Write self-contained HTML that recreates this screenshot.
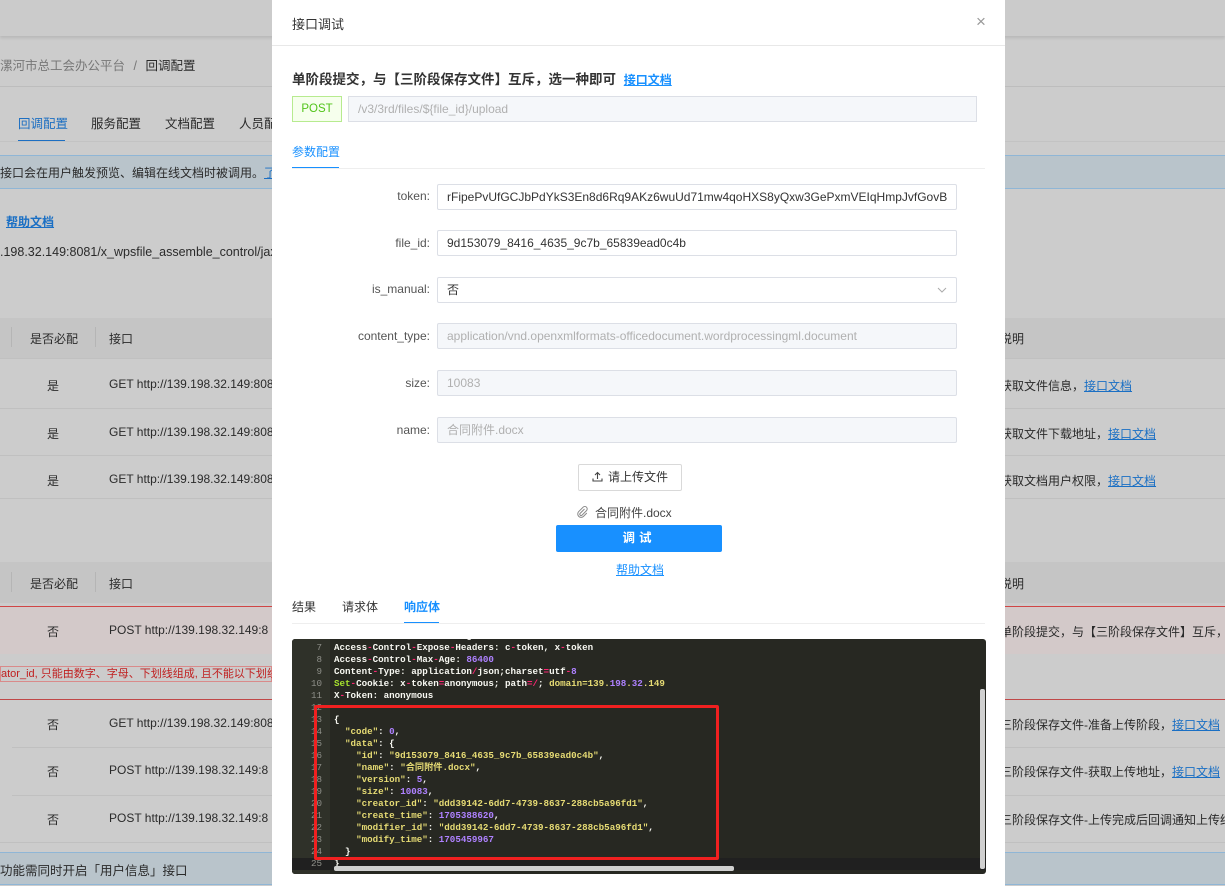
<!DOCTYPE html>
<html><head><meta charset="utf-8"><style>
*{box-sizing:border-box;margin:0;padding:0}
body{width:1225px;height:886px;overflow:hidden;position:relative;background:#cccccc;font-family:"Liberation Sans","Noto Sans CJK SC",sans-serif;font-size:12px;color:#333}
.a{position:absolute;white-space:nowrap}
.bg{color:#2a2a2a}
.lnk{color:#1a6fc4;text-decoration:underline}
.hl{position:absolute;left:0;right:0;height:1px;background:#bdbdbd}
.modal{position:absolute;left:272px;top:0;width:733px;height:886px;background:#fff}
.lbl{position:absolute;right:575px;font-size:12px;color:#555}
.inp{position:absolute;left:165px;width:520px;height:26px;border:1px solid #dcdfe6;border-radius:2px;padding:0 9px;line-height:24px;font-size:12px;color:#333}
.dis{background:#f5f7fa;color:#b0b0b0}
.code{position:absolute;left:20px;top:639px;width:694px;height:235px;background:#272822;border-radius:3px;overflow:hidden;font-family:"Liberation Mono","Noto Sans CJK SC",monospace;font-size:9.2px;color:#f8f8f2;font-weight:bold}
.gut{position:absolute;left:0;top:0;width:38px;height:100%;background:#2f3129}
.ln{position:absolute;height:12px;line-height:12px}
.n{position:absolute;left:0;width:30px;text-align:right;color:#8f908a;font-weight:normal}
.t{position:absolute;left:42px}
.s{color:#e6db74}.p{color:#ae81ff}.r{color:#f92672}.g{color:#a6e22e}
</style></head><body>
<div class="a" style="left:0;top:0;width:1225px;height:36px;background:#cbcbcb;box-shadow:0 2px 3px rgba(0,0,0,.1)"></div>
<div class="a" style="left:0;top:55px;font-size:12.5px;color:#777">漯河市总工会办公平台 <span style="margin:0 5px">/</span> <span class="bg">回调配置</span></div>
<div class="hl" style="top:86px"></div>
<div class="a" style="left:18px;top:113px;font-size:12.5px;color:#1d6fc2">回调配置</div>
<div class="a" style="left:18px;top:140px;width:47px;height:2px;background:#1d6fc2"></div>
<div class="a bg" style="left:91px;top:113px;font-size:12.5px">服务配置</div>
<div class="a bg" style="left:165px;top:113px;font-size:12.5px">文档配置</div>
<div class="a bg" style="left:239px;top:113px;font-size:12.5px">人员配</div>
<div class="hl" style="top:141px;background:#c3c3c3"></div>
<div class="a" style="left:0;top:155px;width:1225px;height:34px;background:#b9c4cb;border-top:1px solid #8fb6d6;border-bottom:1px solid #8fb6d6"></div>
<div class="a bg" style="left:0;top:164px;font-size:12px">接口会在用户触发预览、编辑在线文档时被调用。<span class="lnk">了解</span></div>
<div class="a lnk" style="left:6px;top:213px;font-weight:bold">帮助文档</div>
<div class="a bg" style="left:0;top:245px;font-size:12.5px">.198.32.149:8081/x_wpsfile_assemble_control/jax</div>
<div class="a" style="left:0;top:318px;width:1225px;height:40px;background:#c5c5c5"></div>
<div class="a bg" style="left:30px;top:330px">是否必配</div>
<div class="a" style="left:11px;top:327px;width:1px;height:20px;background:#b5b5b5"></div>
<div class="a" style="left:95px;top:327px;width:1px;height:20px;background:#b5b5b5"></div>
<div class="a bg" style="left:109px;top:330px">接口</div>
<div class="a bg" style="left:1000px;top:330px">说明</div>
<div class="hl" style="top:358px;background:#c0c0c0"></div>
<div class="a bg" style="left:47px;top:377px">是</div><div class="a bg" style="left:109px;top:377px">GET http://139.198.32.149:808</div><div class="a bg" style="left:1000px;top:377px">获取文件信息，<span class="lnk">接口文档</span></div>
<div class="hl" style="top:408px;background:#c0c0c0"></div>
<div class="a bg" style="left:47px;top:425px">是</div><div class="a bg" style="left:109px;top:425px">GET http://139.198.32.149:808</div><div class="a bg" style="left:1000px;top:425px">获取文件下载地址，<span class="lnk">接口文档</span></div>
<div class="hl" style="top:455px;background:#c0c0c0"></div>
<div class="a bg" style="left:47px;top:472px">是</div><div class="a bg" style="left:109px;top:472px">GET http://139.198.32.149:808</div><div class="a bg" style="left:1000px;top:472px">获取文档用户权限，<span class="lnk">接口文档</span></div>
<div class="hl" style="top:498px;background:#c0c0c0"></div>
<div class="a" style="left:0;top:562px;width:1225px;height:41px;background:#c5c5c5"></div>
<div class="a bg" style="left:30px;top:575px">是否必配</div>
<div class="a" style="left:11px;top:572px;width:1px;height:20px;background:#b5b5b5"></div>
<div class="a" style="left:95px;top:572px;width:1px;height:20px;background:#b5b5b5"></div>
<div class="a bg" style="left:109px;top:575px">接口</div>
<div class="a bg" style="left:1000px;top:575px">说明</div>
<div class="a" style="left:0;top:606px;width:1225px;height:48px;background:#d3c9c9;border-top:1px solid #d04545"></div>
<div class="a bg" style="left:47px;top:623px">否</div><div class="a bg" style="left:109px;top:623px">POST http://139.198.32.149:8</div><div class="a bg" style="left:1000px;top:623px">单阶段提交，与【三阶段保存文件】互斥，选</div>
<div class="a" style="left:0;top:666px;width:272px;height:16px;border:1px solid #d98a8a;color:#c02020;font-size:11px;line-height:14px">ator_id, 只能由数字、字母、下划线组成, 且不能以下划线开头</div>
<div class="hl" style="top:699px;background:#c04848"></div>
<div class="a bg" style="left:47px;top:716px">否</div><div class="a bg" style="left:109px;top:716px">GET http://139.198.32.149:808</div><div class="a bg" style="left:1000px;top:716px">三阶段保存文件-准备上传阶段，<span class="lnk">接口文档</span></div>
<div class="hl" style="top:747px;left:12px;background:#c0c0c0"></div>
<div class="a bg" style="left:47px;top:763px">否</div><div class="a bg" style="left:109px;top:763px">POST http://139.198.32.149:8</div><div class="a bg" style="left:1000px;top:763px">三阶段保存文件-获取上传地址，<span class="lnk">接口文档</span></div>
<div class="hl" style="top:795px;left:12px;background:#c0c0c0"></div>
<div class="a bg" style="left:47px;top:811px">否</div><div class="a bg" style="left:109px;top:811px">POST http://139.198.32.149:8</div><div class="a bg" style="left:1000px;top:811px">三阶段保存文件-上传完成后回调通知上传结</div>
<div class="hl" style="top:842px;background:#c0c0c0"></div>
<div class="a" style="left:0;top:852px;width:1225px;height:33px;background:#b9c4cb;border-top:1px solid #8fb6d6;border-bottom:1px solid #8fb6d6"></div>
<div class="a bg" style="left:0;top:860px;font-size:12.5px">功能需同时开启「用户信息」接口</div>

<div class="modal">
<div class="a" style="left:20px;top:14px;font-size:13px;color:#333">接口调试</div>
<div class="a" style="left:704px;top:13px;font-size:17px;color:#999;line-height:17px">×</div>
<div class="a" style="left:0;top:45px;width:733px;height:1px;background:#e8e8e8"></div>
<div class="a" style="left:20px;top:68px;font-size:13.5px;font-weight:bold;color:#333">单阶段提交，与【三阶段保存文件】互斥，选一种即可 <span style="font-size:12px;color:#1890ff;text-decoration:underline;margin-left:4px">接口文档</span></div>
<div class="a" style="left:20px;top:96px;width:50px;height:26px;border:1px solid #b7eb8f;background:#f6ffed;color:#52c41a;font-size:11.5px;text-align:center;line-height:24px">POST</div>
<div class="a dis" style="left:76px;top:96px;width:629px;height:26px;border:1px solid #dcdfe6;padding-left:9px;line-height:24px;font-size:12px">/v3/3rd/files/${file_id}/upload</div>
<div class="a" style="left:20px;top:143px;font-size:12px;color:#1890ff">参数配置</div>
<div class="a" style="left:20px;top:167px;width:47px;height:2px;background:#1890ff"></div>
<div class="a" style="left:20px;top:168px;width:693px;height:1px;background:#eee"></div>

<div class="lbl" style="top:189px">token:</div><div class="inp" style="top:184px">rFipePvUfGCJbPdYkS3En8d6Rq9AKz6wuUd71mw4qoHXS8yQxw3GePxmVEIqHmpJvfGovB</div>
<div class="lbl" style="top:236px">file_id:</div><div class="inp" style="top:230px">9d153079_8416_4635_9c7b_65839ead0c4b</div>
<div class="lbl" style="top:282px">is_manual:</div><div class="inp" style="top:277px">否<svg style="position:absolute;right:9px;top:9px" width="10" height="6" viewBox="0 0 10 6"><path d="M1 1L5 5 9 1" fill="none" stroke="#aaa"/></svg></div>
<div class="lbl" style="top:329px">content_type:</div><div class="inp dis" style="top:323px">application/vnd.openxmlformats-officedocument.wordprocessingml.document</div>
<div class="lbl" style="top:376px">size:</div><div class="inp dis" style="top:370px">10083</div>
<div class="lbl" style="top:423px">name:</div><div class="inp dis" style="top:417px">合同附件.docx</div>

<div class="a" style="left:306px;top:464px;width:104px;height:27px;border:1px solid #d9d9d9;border-radius:2px;text-align:center;line-height:25px;font-size:12px;color:#333">
<svg width="11" height="11" viewBox="0 0 11 11" style="vertical-align:-1px;margin-right:5px"><path d="M5.5 8V1.5M3 4L5.5 1.5 8 4M1 7.5V10H10V7.5" fill="none" stroke="#444" stroke-width="1.1"/></svg>请上传文件</div>
<div class="a" style="left:305px;top:504px;font-size:12px;color:#444"><svg width="11" height="12" viewBox="0 0 11 12" style="vertical-align:-1px;margin-right:7px"><path d="M7.5 3L3 7.5a1.3 1.3 0 0 0 1.8 1.8L9.5 4.6a2.4 2.4 0 0 0-3.4-3.4L1.6 5.7a3.4 3.4 0 0 0 4.8 4.8L9.8 7" fill="none" stroke="#888" stroke-width="1"/></svg>合同附件.docx</div>
<div class="a" style="left:284px;top:525px;width:166px;height:27px;background:#1890ff;border-radius:2px;color:#fff;font-weight:bold;text-align:center;line-height:27px;font-size:12.5px;letter-spacing:4px">调试</div>
<div class="a" style="left:344px;top:561px;color:#1890ff;text-decoration:underline;font-size:12px">帮助文档</div>

<div class="a" style="left:20px;top:598px;font-size:12px;color:#333">结果</div>
<div class="a" style="left:70px;top:598px;font-size:12px;color:#333">请求体</div>
<div class="a" style="left:132px;top:598px;font-size:12px;color:#1890ff;font-weight:bold">响应体</div>
<div class="a" style="left:132px;top:622px;width:35px;height:2px;background:#1890ff"></div>
<div class="a" style="left:20px;top:623px;width:693px;height:1px;background:#eee"></div>

<div class="code">
<div class="gut"></div>
<div class="ln" style="top:-9px;width:100%"><span class="n">6</span><span class="t">Access-Control-Allow-Origin: *</span></div>
<div class="ln" style="top:3px;width:100%"><span class="n">7</span><span class="t">Access<span class="r">-</span>Control<span class="r">-</span>Expose<span class="r">-</span>Headers: c<span class="r">-</span>token, x<span class="r">-</span>token</span></div>
<div class="ln" style="top:15px;width:100%"><span class="n">8</span><span class="t">Access<span class="r">-</span>Control<span class="r">-</span>Max<span class="r">-</span>Age: <span class="p">86400</span></span></div>
<div class="ln" style="top:27px;width:100%"><span class="n">9</span><span class="t">Content<span class="r">-</span>Type: application<span class="r">/</span>json;charset<span class="r">=</span>utf<span class="r">-</span><span class="p">8</span></span></div>
<div class="ln" style="top:39px;width:100%"><span class="n">10</span><span class="t"><span class="g">Set</span><span class="r">-</span>Cookie: x<span class="r">-</span>token<span class="r">=</span>anonymous; path<span class="r">=/</span>; <span class="s">domain=139.<span class="p">198</span>.<span class="p">32</span>.149</span></span></div>
<div class="ln" style="top:51px;width:100%"><span class="n">11</span><span class="t">X<span class="r">-</span>Token: anonymous</span></div>
<div class="ln" style="top:63px;width:100%"><span class="n">12</span></div>
<div class="ln" style="top:75px;width:100%"><span class="n">13</span><span class="t">{</span></div>
<div class="ln" style="top:87px;width:100%"><span class="n">14</span><span class="t">&nbsp;&nbsp;<span class="s">"code"</span>: <span class="p">0</span>,</span></div>
<div class="ln" style="top:99px;width:100%"><span class="n">15</span><span class="t">&nbsp;&nbsp;<span class="s">"data"</span>: {</span></div>
<div class="ln" style="top:111px;width:100%"><span class="n">16</span><span class="t">&nbsp;&nbsp;&nbsp;&nbsp;<span class="s">"id"</span>: <span class="s">"9d153079_8416_4635_9c7b_65839ead0c4b"</span>,</span></div>
<div class="ln" style="top:123px;width:100%"><span class="n">17</span><span class="t">&nbsp;&nbsp;&nbsp;&nbsp;<span class="s">"name"</span>: <span class="s">"合同附件.docx"</span>,</span></div>
<div class="ln" style="top:135px;width:100%"><span class="n">18</span><span class="t">&nbsp;&nbsp;&nbsp;&nbsp;<span class="s">"version"</span>: <span class="p">5</span>,</span></div>
<div class="ln" style="top:147px;width:100%"><span class="n">19</span><span class="t">&nbsp;&nbsp;&nbsp;&nbsp;<span class="s">"size"</span>: <span class="p">10083</span>,</span></div>
<div class="ln" style="top:159px;width:100%"><span class="n">20</span><span class="t">&nbsp;&nbsp;&nbsp;&nbsp;<span class="s">"creator_id"</span>: <span class="s">"ddd39142-6dd7-4739-8637-288cb5a96fd1"</span>,</span></div>
<div class="ln" style="top:171px;width:100%"><span class="n">21</span><span class="t">&nbsp;&nbsp;&nbsp;&nbsp;<span class="s">"create_time"</span>: <span class="p">1705388620</span>,</span></div>
<div class="ln" style="top:183px;width:100%"><span class="n">22</span><span class="t">&nbsp;&nbsp;&nbsp;&nbsp;<span class="s">"modifier_id"</span>: <span class="s">"ddd39142-6dd7-4739-8637-288cb5a96fd1"</span>,</span></div>
<div class="ln" style="top:195px;width:100%"><span class="n">23</span><span class="t">&nbsp;&nbsp;&nbsp;&nbsp;<span class="s">"modify_time"</span>: <span class="p">1705459967</span></span></div>
<div class="ln" style="top:207px;width:100%"><span class="n">24</span><span class="t">&nbsp;&nbsp;}</span></div>
<div class="ln" style="top:219px;width:100%;background:#202020"><span class="n">25</span><span class="t">}</span></div>
<div class="a" style="left:688px;top:50px;width:5px;height:180px;background:#d0d0d0;border-radius:2px"></div>
<div class="a" style="left:42px;top:227px;width:400px;height:5px;background:#d0d0d0;border-radius:2px"></div>
</div>
<div class="a" style="left:42px;top:705px;width:405px;height:155px;border:3px solid #f02020;border-radius:2px"></div>
</div>
</body></html>
